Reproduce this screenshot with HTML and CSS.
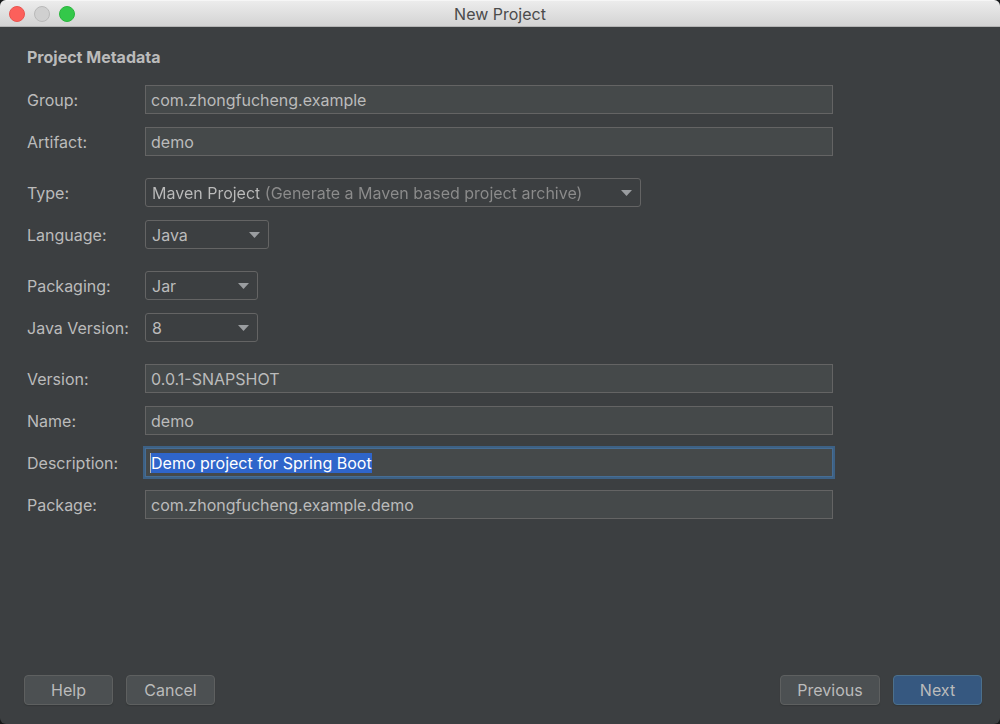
FILE: index.html
```html
<!DOCTYPE html>
<html lang="en">
<head>
<meta charset="utf-8">
<title>New Project</title>
<link rel="stylesheet" href="styles.css">
</head>
<body>
<div class="window">
  <header class="titlebar">
    <div class="lights">
      <button class="light light-close" type="button" aria-label="Close"></button>
      <button class="light light-minimize" type="button" aria-label="Minimize" disabled></button>
      <button class="light light-zoom" type="button" aria-label="Zoom"></button>
    </div>
    <h1 class="title">New Project</h1>
  </header>
  <form class="form">
    <main class="content">
      <h2 class="heading">Project Metadata</h2>
      <div class="groups">
        <div class="group">
          <div class="row"><label class="label" for="group">Group:</label><input class="field" id="group" type="text" value="com.zhongfucheng.example"></div>
          <div class="row"><label class="label" for="artifact">Artifact:</label><input class="field" id="artifact" type="text" value="demo"></div>
        </div>
        <div class="group">
          <div class="row"><label class="label" for="type">Type:</label><div class="combo combo-wide"><select class="select select-type" id="type"><option>Maven Project (Generate a Maven based project archive)</option></select><svg class="arrow" viewBox="0 0 11 6" aria-hidden="true"><path d="M0 0h11L5.500 6z"/></svg></div></div>
          <div class="row"><label class="label" for="language">Language:</label><div class="combo combo-medium"><select class="select" id="language"><option>Java</option></select><svg class="arrow" viewBox="0 0 11 6" aria-hidden="true"><path d="M0 0h11L5.500 6z"/></svg></div></div>
        </div>
        <div class="group">
          <div class="row"><label class="label" for="packaging">Packaging:</label><div class="combo"><select class="select" id="packaging"><option>Jar</option></select><svg class="arrow" viewBox="0 0 11 6" aria-hidden="true"><path d="M0 0h11L5.500 6z"/></svg></div></div>
          <div class="row"><label class="label" for="java-version">Java Version:</label><div class="combo"><select class="select" id="java-version"><option>8</option></select><svg class="arrow" viewBox="0 0 11 6" aria-hidden="true"><path d="M0 0h11L5.500 6z"/></svg></div></div>
        </div>
        <div class="group">
          <div class="row"><label class="label" for="version">Version:</label><input class="field" id="version" type="text" value="0.0.1-SNAPSHOT"></div>
          <div class="row"><label class="label" for="name">Name:</label><input class="field" id="name" type="text" value="demo"></div>
          <div class="row"><label class="label" for="description">Description:</label><input class="field" id="description" type="text" value="Demo project for Spring Boot" spellcheck="false"></div>
          <div class="row"><label class="label" for="package">Package:</label><input class="field" id="package" type="text" value="com.zhongfucheng.example.demo"></div>
        </div>
      </div>
    </main>
    <footer class="footer">
      <div class="actions">
        <button class="button" type="button">Help</button>
        <button class="button" type="button">Cancel</button>
      </div>
      <div class="actions">
        <button class="button button-previous" type="button">Previous</button>
        <button class="button button-primary" type="button">Next</button>
      </div>
    </footer>
  </form>
</div>
<script src="script.js"></script>
</body>
</html>
```
FILE: styles.css
```css
* {
  box-sizing: border-box;
}

body {
  margin: 0;
  background: #17191a;
  color: #bbbbbb;
  font: 16px/20px Inter, Roboto, sans-serif;
}

.window {
  display: flex;
  flex-direction: column;
  min-height: 100vh;
  border-radius: 6px;
  overflow: hidden;
  background: #3c3f41;
}

.titlebar {
  display: grid;
  grid-template-columns: 1fr auto 1fr;
  align-items: center;
  height: 27px;
  padding: 0 9px;
  background: linear-gradient(#ececec, #d3d3d3);
  border-top: 1px solid #f6f6f6;
  border-bottom: 1px solid #b4b4b4;
}

.lights {
  display: flex;
  gap: 9px;
}

.light {
  width: 16px;
  height: 16px;
  padding: 0;
  border: 1px solid;
  border-radius: 50%;
}

.light-close {
  background: #fc605b;
  border-color: #e9544f;
}

.light-minimize {
  background: #d0d0d0;
  border-color: #b9b9b9;
}

.light-zoom {
  background: #34c84a;
  border-color: #2bb53e;
}

.title {
  margin: 0;
  color: #4b4b4b;
  font-size: 16px;
  font-weight: 400;
}

.form {
  display: flex;
  flex: 1;
  flex-direction: column;
  justify-content: space-between;
}

.content {
  padding: 20px 167px 20px 27px;
}

.heading {
  margin: 0 0 18px;
  font-size: 16px;
  line-height: 20px;
  font-weight: 700;
}

.groups {
  display: grid;
  gap: 22px;
}

.group {
  display: grid;
  gap: 13px;
}

.row {
  display: grid;
  grid-template-columns: 118px 1fr;
  align-items: center;
}

.field,
.select {
  width: 100%;
  height: 29px;
  margin: 0;
  border: 1px solid #646464;
  color: #bbbbbb;
  font: inherit;
}

.field {
  padding: 0 5px;
  background: #45494a;
  border-radius: 0;
  outline: none;
}

/* The caret stays visible beside selected text. */
.field:focus {
  border-color: #466d94;
  box-shadow: 0 0 0 2px #3d6185;
  background: linear-gradient(#bbbbbb, #bbbbbb) 4px center / 1px 20px no-repeat #45494a;
}

.field::selection {
  background: #2f65ca;
  color: #ffffff;
}

.combo {
  position: relative;
  width: 113px;
  border-radius: 3px;
}

.combo-medium {
  width: 124px;
}

.combo-wide {
  width: 496px;
}

.select {
  display: block;
  appearance: none;
  padding: 0 28px 0 6px;
  background: #3c3f41;
  border-radius: 3px;
}

/* The project type is brighter than the description after it. */
.select-type {
  background: linear-gradient(90deg, #bbbbbb 113px, #8c8c8c 113px);
  background-clip: text;
  color: transparent;
}

.arrow {
  position: absolute;
  top: 12px;
  right: 9px;
  width: 11px;
  height: 6px;
  fill: #9a9da0;
  pointer-events: none;
}

.footer {
  display: flex;
  justify-content: space-between;
  padding: 0 18px 19px 24px;
}

.actions {
  display: flex;
  gap: 13px;
}

.button {
  min-width: 89px;
  height: 30px;
  padding: 0 16px;
  border: 1px solid #5e6060;
  border-radius: 4px;
  background: #4c5052;
  box-shadow: 0 1px 1px #343739;
  color: #bbbbbb;
  font: inherit;
}

.button-previous {
  min-width: 100px;
}

.button-primary {
  background: #365880;
  border-color: #4c708c;
}
```
FILE: script.js
```js
const description = document.getElementById("description");
description.focus();
description.select();
```
